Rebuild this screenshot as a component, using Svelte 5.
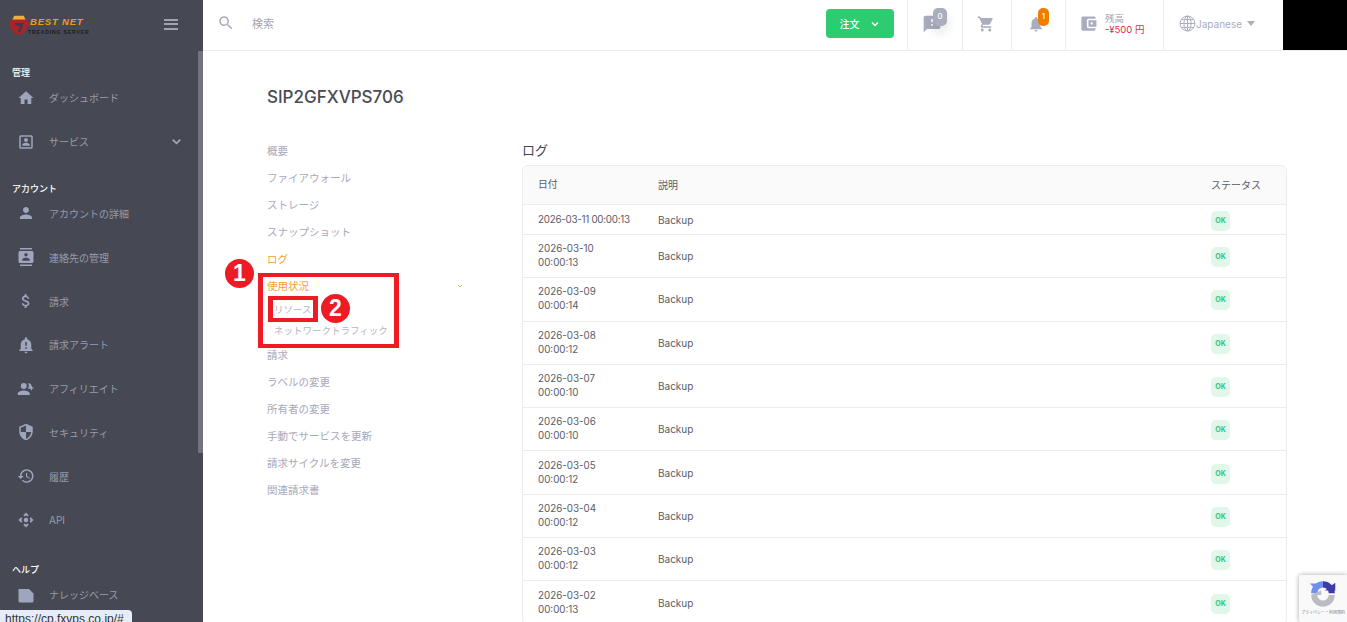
<script>
  const sideGroups = [
    { label: '管理', items: [
      { name: 'ダッシュボード', icon: 'home' },
      { name: 'サービス', icon: 'box', chevron: true }
    ]},
    { label: 'アカウント', items: [
      { name: 'アカウントの詳細', icon: 'person' },
      { name: '連絡先の管理', icon: 'contacts' },
      { name: '請求', icon: 'money' },
      { name: '請求アラート', icon: 'alert' },
      { name: 'アフィリエイト', icon: 'group' },
      { name: 'セキュリティ', icon: 'shield' },
      { name: '履歴', icon: 'history' },
      { name: 'API', icon: 'api' }
    ]},
    { label: 'ヘルプ', items: [
      { name: 'ナレッジベース', icon: 'note' }
    ]}
  ];

  const icons = {
    home: 'M10 20v-6h4v6h5v-8h3L12 3 2 12h3v8z',
    box: 'M3 5v14a2 2 0 0 0 2 2h14a2 2 0 0 0 2-2V5a2 2 0 0 0-2-2H5a2 2 0 0 0-2 2zm2 0h14v14H5zm7 7a2.6 2.6 0 1 0 0-5.2 2.6 2.6 0 0 0 0 5.2zm-5 5h10v-1.2c0-1.9-3.3-2.8-5-2.8s-5 .9-5 2.8z',
    person: 'M12 12c2.21 0 4-1.79 4-4s-1.79-4-4-4-4 1.79-4 4 1.79 4 4 4zm0 2c-2.67 0-8 1.34-8 4v2h16v-2c0-2.66-5.33-4-8-4z',
    contacts: 'M20 0H4v2h16V0zM4 24h16v-2H4v2zM20 4H4c-1.1 0-2 .9-2 2v12c0 1.1.9 2 2 2h16c1.1 0 2-.9 2-2V6c0-1.1-.9-2-2-2zm-8 2.75c1.24 0 2.25 1.01 2.25 2.25s-1.01 2.25-2.25 2.25S9.75 10.24 9.75 9 10.76 6.75 12 6.75zM17 17H7v-1.5c0-1.67 3.33-2.5 5-2.5s5 .83 5 2.5V17z',
    money: 'M11.8 10.9c-2.27-.59-3-1.2-3-2.15 0-1.09 1.01-1.85 2.7-1.85 1.78 0 2.44.85 2.5 2.1h2.21c-.07-1.72-1.12-3.3-3.21-3.81V3h-3v2.16c-1.94.42-3.5 1.68-3.5 3.61 0 2.31 1.91 3.46 4.7 4.13 2.5.6 3 1.48 3 2.41 0 .69-.49 1.79-2.7 1.79-2.06 0-2.87-.92-2.98-2.1h-2.2c.12 2.19 1.76 3.42 3.68 3.83V21h3v-2.15c1.95-.37 3.5-1.5 3.5-3.55 0-2.84-2.43-3.81-4.7-4.4z',
    alert: 'M12 23c1.1 0 1.99-.89 1.99-1.99h-3.98c0 1.1.89 1.99 1.99 1.99zm7-6v-6c0-3.35-2.36-6.15-5.5-6.83V3c0-.83-.67-1.5-1.5-1.5s-1.5.67-1.5 1.5v1.17C7.36 4.85 5 7.65 5 11v6l-2 2v1h18v-1l-2-2zm-6 0h-2v-2h2v2zm0-4h-2V8h2v5z',
    group: 'M9 12a4 4 0 1 0 0-8 4 4 0 0 0 0 8zm0 2c-2.7 0-8 1.3-8 4v2h16v-2c0-2.7-5.3-4-8-4zm6.5-2.2a3.8 3.8 0 0 0 0-7.6c-.4 0-.7.1-1 .2a6 6 0 0 1 0 7.2c.3.1.6.2 1 .2zM20 10V8h-1.5v2h-2v1.5h2v2H20v-2h2V10z',
    shield: 'M12 1L3 5v6c0 5.55 3.84 10.74 9 12 5.16-1.26 9-6.45 9-12V5l-9-4zm0 10.99h7c-.53 4.12-3.28 7.79-7 8.94V12H5V6.3l7-3.11v8.8z',
    history: 'M13 3c-4.97 0-9 4.03-9 9H1l3.89 3.89.07.14L9 12H6c0-3.87 3.13-7 7-7s7 3.13 7 7-3.13 7-7 7c-1.93 0-3.68-.79-4.94-2.06l-1.42 1.42C8.27 19.99 10.51 21 13 21c4.97 0 9-4.03 9-9s-4.03-9-9-9zm-1 5v5l4.28 2.54.72-1.21-3.5-2.08V8H12z',
    api: 'M15.54 5.54L13.77 7.3 12 5.54 10.23 7.3 8.46 5.54 12 2zm2.92 10l-1.76-1.77L18.46 12l-1.76-1.77 1.76-1.77L22 12zm-10 2.92l1.77-1.76L12 18.46l1.77-1.76 1.77 1.76L12 22zm-2.92-10l1.76 1.77L5.54 12l1.76 1.77-1.76 1.77L2 12zM12 9a3 3 0 1 0 0 6 3 3 0 0 0 0-6z',
    note: 'M2 4h14l6 6v10a2 2 0 0 1-2 2H4a2 2 0 0 1-2-2z'
  };

  const subnav = [
    { name: '概要' },
    { name: 'ファイアウォール' },
    { name: 'ストレージ' },
    { name: 'スナップショット' },
    { name: 'ログ', active: true },
    { name: '使用状況', active: true, open: true, children: ['リソース', 'ネットワークトラフィック'] },
    { name: '請求' },
    { name: 'ラベルの変更' },
    { name: '所有者の変更' },
    { name: '手動でサービスを更新' },
    { name: '請求サイクルを変更' },
    { name: '関連請求書' }
  ];

  const logs = [
    ['2026-03-11', '00:00:13'],
    ['2026-03-10', '00:00:13'],
    ['2026-03-09', '00:00:14'],
    ['2026-03-08', '00:00:12'],
    ['2026-03-07', '00:00:10'],
    ['2026-03-06', '00:00:10'],
    ['2026-03-05', '00:00:12'],
    ['2026-03-04', '00:00:12'],
    ['2026-03-03', '00:00:12'],
    ['2026-03-02', '00:00:13']
  ];
</script>

<div class="shell">
  <aside class="sidebar">
    <div class="brand">
      <svg class="logo" viewBox="0 0 30 30" width="20" height="20">
        <path d="M8 1h14l3 6H5z" fill="#e8b23a" />
        <path d="M3 7h24l3 8-9 14H9L0 15z" fill="#a8242a" />
        <path d="M9 12h13l-5 14h-4l4-10h-7z" fill="#3a3d46" />
      </svg>
      <div class="brand-text">
        <span class="brand-top">BEST NET</span>
        <span class="brand-sub">TREADING SERVER</span>
      </div>
      <div class="burger"><i></i><i></i><i></i></div>
    </div>
    <nav class="side-nav">
      {#each sideGroups as group}
        <div class="side-group">
          <div class="side-label">{group.label}</div>
          {#each group.items as item}
            <div class="side-item">
              <svg class="side-icon" viewBox="0 0 24 24" width="18" height="18"><path d={icons[item.icon]} /></svg>
              <span>{item.name}</span>
              {#if item.chevron}
                <svg class="side-chev" viewBox="0 0 24 24" width="15" height="15"><path d="M6 9l6 6 6-6" /></svg>
              {/if}
            </div>
          {/each}
        </div>
      {/each}
    </nav>
    <div class="side-thumb"></div>
  </aside>

  <div class="main">
    <header class="topbar">
      <div class="search">
        <svg viewBox="0 0 24 24" width="18" height="18"><path d="M15.5 14h-.79l-.28-.27C15.41 12.59 16 11.11 16 9.5 16 5.91 13.09 3 9.5 3S3 5.91 3 9.5 5.91 16 9.5 16c1.61 0 3.09-.59 4.23-1.57l.27.28v.79l5 4.99L20.49 19l-4.99-5zm-6 0C7.01 14 5 11.99 5 9.5S7.01 5 9.5 5 14 7.01 14 9.5 11.99 14 9.5 14z" /></svg>
        <span>検索</span>
      </div>
      <button class="order">
        注文
        <svg viewBox="0 0 24 24" width="12" height="12"><path d="M6 9l6 6 6-6" /></svg>
      </button>
      <div class="cell chat">
        <svg viewBox="0 0 24 24" width="20" height="20"><path d="M20 2H4c-1.1 0-1.99.9-1.99 2L2 22l4-4h14c1.1 0 2-.9 2-2V4c0-1.1-.9-2-2-2zm-7 12h-2v-2h2v2zm0-4h-2V6h2v4z" /></svg>
        <b class="badge grey">0</b>
      </div>
      <div class="cell cart">
        <svg viewBox="0 0 24 24" width="18" height="18"><path d="M7 18c-1.1 0-1.99.9-1.99 2S5.9 22 7 22s2-.9 2-2-.9-2-2-2zM1 2v2h2l3.6 7.59-1.35 2.45c-.16.28-.25.61-.25.96 0 1.1.9 2 2 2h12v-2H7.42c-.14 0-.25-.11-.25-.25l.03-.12.9-1.63h7.45c.75 0 1.41-.41 1.75-1.03l3.58-6.49c.08-.14.12-.31.12-.48 0-.55-.45-1-1-1H5.21l-.94-2H1zm16 16c-1.1 0-1.99.9-1.99 2s.89 2 1.99 2 2-.9 2-2-.9-2-2-2z" /></svg>
      </div>
      <div class="cell bell">
        <svg viewBox="0 0 24 24" width="18" height="18"><path d="M12 22c1.1 0 2-.9 2-2h-4c0 1.1.89 2 2 2zm6-6v-5c0-3.07-1.64-5.64-4.5-6.32V4c0-.83-.67-1.5-1.5-1.5s-1.5.67-1.5 1.5v.68C7.63 5.36 6 7.92 6 11v5l-2 2v1h16v-1l-2-2z" /></svg>
        <b class="badge orange">1</b>
      </div>
      <div class="cell wallet">
        <svg viewBox="0 0 24 24" width="19" height="19"><path d="M21 18v1c0 1.1-.9 2-2 2H5c-1.11 0-2-.9-2-2V5c0-1.1.89-2 2-2h14c1.1 0 2 .9 2 2v1h-9c-1.11 0-2 .9-2 2v8c0 1.1.89 2 2 2h9zm-9-2h10V8H12v8zm4-2.5c-.83 0-1.5-.67-1.5-1.5s.67-1.5 1.5-1.5 1.5.67 1.5 1.5-.67 1.5-1.5 1.5z" /></svg>
        <div class="balance">
          <span>残高</span>
          <strong>-¥500 円</strong>
        </div>
      </div>
      <div class="cell lang">
        <svg class="globe" viewBox="0 0 24 24" width="17" height="17">
          <circle cx="12" cy="12" r="10.5" />
          <ellipse cx="12" cy="12" rx="5" ry="10.5" />
          <path d="M12 1.5v21M1.5 12h21M3 6.5h18M3 17.5h18" />
        </svg>
        <span>Japanese</span>
        <i class="caret"></i>
      </div>
      <div class="black"></div>
    </header>

    <div class="page">
      <h1>SIP2GFXVPS706</h1>
      <div class="columns">
        <ul class="subnav">
          {#each subnav as entry}
            <li class:active={entry.active}>
              <div class="subnav-row">
                {entry.name}
                {#if entry.open}
                  <svg viewBox="0 0 24 24" width="8" height="8"><path d="M6 9l6 6 6-6" /></svg>
                {/if}
              </div>
              {#if entry.children}
                <ul class="subnav-children">
                  {#each entry.children as child}
                    <li>{child}</li>
                  {/each}
                </ul>
              {/if}
            </li>
          {/each}
        </ul>

        <section class="logs">
          <h2>ログ</h2>
          <div class="card">
            <div class="row head">
              <div class="c-date">日付</div>
              <div class="c-desc">説明</div>
              <div class="c-stat">ステータス</div>
            </div>
            {#each logs as log, i}
              <div class="row" class:single={i === 0}>
                <div class="c-date">
                  {#if i === 0}
                    {log[0]} {log[1]}
                  {:else}
                    {log[0]}<br />{log[1]}
                  {/if}
                </div>
                <div class="c-desc">Backup</div>
                <div class="c-stat"><span class="ok">OK</span></div>
              </div>
            {/each}
          </div>
        </section>
      </div>
    </div>
  </div>

  <!-- annotations drawn over the screenshot -->
  <div class="mark box-outer"></div>
  <div class="mark box-inner"></div>
  <div class="mark num num-1">1</div>
  <div class="mark num num-2">2</div>

  <div class="url-tip">https://cp.fxvps.co.jp/#</div>

  <div class="recaptcha">
    <svg viewBox="0 0 32 32" width="30" height="28">
      <path d="M6 15A10 10 0 0 1 16 5" fill="none" stroke="#6f8ff0" stroke-width="7" />
      <path d="M1 4h9v9z" fill="#6f8ff0" />
      <path d="M16 5A10 10 0 0 1 26 15" fill="none" stroke="#3a3aa8" stroke-width="7" />
      <path d="M18 12h12V3z" fill="#3a3aa8" />
      <path d="M26 17A10 10 0 0 1 6 17" fill="none" stroke="#b9bcc0" stroke-width="7" />
      <path d="M2 17h12v-5z" fill="#b9bcc0" />
    </svg>
    <span>プライバシー・利用規約</span>
  </div>
</div>

<style>
  :global(body) {
    margin: 0;
    background: #fff;
    overflow: hidden;
  }

  .shell {
    position: relative;
    display: flex;
    height: 622px;
    overflow: hidden;
    font-family: Inter, "Noto Sans CJK JP", sans-serif;
    font-size: 10px;
    color: #55565f;
  }

  .sidebar {
    position: relative;
    flex: 0 0 203px;
    background: #464953;
    color: #969bad;
    overflow: hidden;
  }

  .brand {
    display: flex;
    align-items: center;
    height: 50px;
    padding: 0 25px 0 9px;
    box-sizing: border-box;
  }

  .brand-text {
    display: flex;
    flex-direction: column;
    margin-left: -1px;
    line-height: 1;
  }

  .brand-top {
    color: #f39c12;
    font: italic 700 9.5px "Liberation Sans", sans-serif;
    letter-spacing: 0.8px;
    padding-left: 2px;
  }

  .brand-sub {
    color: #1c1c20;
    font: 700 5px "Liberation Sans", sans-serif;
    letter-spacing: 0.9px;
    margin-top: 2px;
  }

  .burger {
    margin: -2px 0 0 auto;
    width: 14px;
    display: flex;
    flex-direction: column;
    gap: 2.5px;
  }

  .burger i {
    height: 2px;
    background: #a0a3ae;
  }

  .side-nav {
    padding-top: 16px;
  }

  .side-group {
    margin-top: 18px;
  }

  .side-group:first-child {
    margin-top: 0;
  }

  .side-group:last-child {
    margin-top: 21px;
  }

  .side-label {
    padding-left: 12px;
    height: 13px;
    line-height: 13px;
    color: #fff;
    font-size: 9px;
    font-weight: 500;
    margin-bottom: -3px;
  }

  .side-item {
    display: flex;
    align-items: center;
    height: 43.8px;
    padding-left: 17px;
    padding-right: 19px;
  }

  .side-item span {
    margin-left: 14px;
    font-size: 10px;
  }

  .side-icon {
    flex: none;
    fill: #9ea5bd;
  }

  .side-chev {
    margin-left: auto;
    fill: none;
    stroke: #a5a9b8;
    stroke-width: 2.5;
  }

  .side-thumb {
    position: absolute;
    right: 0;
    top: 51px;
    width: 5px;
    height: 402px;
    background: #70737c;
  }

  .main {
    flex: 1;
    min-width: 0;
    display: flex;
    flex-direction: column;
  }

  .topbar {
    flex: 0 0 51px;
    box-sizing: border-box;
    display: flex;
    align-items: stretch;
    border-bottom: 1px solid #ececf0;
  }

  .search {
    flex: 1;
    display: flex;
    align-items: center;
    gap: 17px;
    padding: 0 0 4px 14px;
    color: #a3a5b0;
    font-size: 11px;
  }

  .search svg {
    fill: #a9aebd;
  }

  .order {
    align-self: center;
    margin: -3px 13px 0 1px;
    width: 68px;
    height: 29px;
    border: 0;
    border-radius: 4px;
    background: #2ecc71;
    color: #fff;
    font: 500 10px Inter, "Noto Sans CJK JP", sans-serif;
    display: flex;
    align-items: center;
    justify-content: center;
    gap: 9px;
  }

  .order svg {
    fill: none;
    stroke: #fff;
    stroke-width: 3;
  }

  .cell {
    position: relative;
    display: flex;
    align-items: center;
    justify-content: center;
    border-left: 1px solid #ececf0;
    box-sizing: border-box;
    margin-bottom: -1px;
    padding-bottom: 4px;
  }

  .cell svg {
    fill: #a9adbd;
  }

  .chat { width: 55px; padding-right: 7px; }
  .cart { width: 49px; padding-right: 2px; }
  .bell { width: 54px; padding-right: 5px; }

  .wallet {
    width: 98px;
    justify-content: flex-start;
    padding-left: 13px;
    gap: 7px;
  }

  .balance {
    display: flex;
    flex-direction: column;
    line-height: 11px;
    font-size: 9.5px;
  }

  .balance span {
    color: #a3a5b0;
  }

  .balance strong {
    color: #e0284a;
    font-weight: 400;
    white-space: nowrap;
  }

  .lang {
    width: 114px;
    justify-content: flex-start;
    padding-left: 15px;
    color: #a9adbd;
    font-size: 10px;
  }

  .lang .globe {
    fill: none;
    stroke: #a9adbd;
    stroke-width: 1.4;
  }

  .caret {
    margin-left: 5px;
    border: 4px solid transparent;
    border-top: 5px solid #a9adbd;
    border-bottom: 0;
  }

  .black {
    width: 64px;
    margin-left: 6px;
    background: #000;
  }

  .badge {
    position: absolute;
    top: 8px;
    color: #fff;
    font-size: 8px;
    font-weight: 500;
    text-align: center;
    line-height: 16px;
    border-radius: 5px;
  }

  .badge.grey {
    left: 25px;
    width: 14px;
    height: 18px;
    background: #a9adbd;
    box-shadow: 0 6px 12px rgba(0, 0, 0, 0.12);
  }

  .badge.orange {
    left: 26px;
    width: 11px;
    height: 18px;
    background: #f07d00;
  }

  .page {
    flex: 1;
    padding: 35px 60px 0 64px;
    min-height: 0;
  }

  h1 {
    margin: 0 0 31px;
    font-size: 17px;
    line-height: 22px;
    font-weight: 500;
    color: #4a4b55;
  }

  .columns {
    display: flex;
  }

  .subnav {
    flex: 0 0 255px;
    list-style: none;
    margin: -2px 0 0;
    padding: 0;
    font-size: 10.5px;
    color: #a8a8bb;
  }

  .subnav-row {
    display: flex;
    align-items: center;
    justify-content: space-between;
    width: 197px;
    height: 27px;
  }

  .subnav li.active > .subnav-row {
    color: #f5a033;
  }

  .subnav-row svg {
    fill: none;
    stroke: #f5a033;
    stroke-width: 2.5;
  }

  .subnav-children {
    list-style: none;
    margin: 0;
    padding: 0 0 0 7px;
    font-size: 9.5px;
    color: #b4b4c6;
  }

  .subnav-children li {
    height: 22px;
    line-height: 22px;
  }

  .subnav-children li + li {
    height: 20px;
    line-height: 20px;
  }

  .logs {
    flex: 1;
    min-width: 0;
  }

  h2 {
    margin: 1px 0 5px;
    font-size: 13px;
    line-height: 20px;
    font-weight: 400;
    color: #44454e;
  }

  .card {
    border: 1px solid #ececf0;
    border-radius: 6px;
    overflow: hidden;
  }

  .row {
    display: flex;
    align-items: center;
    height: 43.3px;
    box-sizing: border-box;
    padding-left: 15px;
    border-top: 1px solid #ececf0;
    line-height: 14px;
    font-size: 10px;
    color: #5a5b66;
  }

  .row.head {
    height: 38px;
    border-top: 0;
    background: #fafafa;
  }

  .row.single {
    height: 30px;
  }

  .c-date { flex: 0 0 120px; white-space: nowrap; font-size: 9.8px; }
  .row.single .c-date { letter-spacing: -0.25px; }
  .c-desc { flex: 1; }
  .c-stat { flex: 0 0 75px; }
  .row:not(.head) .c-stat { padding-top: 2px; }

  .ok {
    display: inline-block;
    width: 19px;
    height: 20px;
    line-height: 20px;
    border-radius: 5px;
    background: #e0f7ea;
    color: #35c47a;
    font-size: 7px;
    font-weight: 700;
    text-align: center;
  }

  .mark {
    position: absolute;
    box-sizing: border-box;
  }

  .box-outer {
    left: 258px;
    top: 273px;
    width: 141px;
    height: 75px;
    border: solid #ed1c24;
    border-width: 4px 5px;
  }

  .box-inner {
    left: 268px;
    top: 296px;
    width: 50px;
    height: 26px;
    border: solid #ed1c24;
    border-width: 4px 5px;
  }

  .num {
    width: 29px;
    height: 29px;
    border-radius: 50%;
    background: #ed1c24;
    color: #fff;
    font: 700 23px/29px "Liberation Sans", sans-serif;
    text-align: center;
  }

  .num-1 { left: 225px; top: 259px; }
  .num-2 { left: 321px; top: 294px; }

  .url-tip {
    position: absolute;
    left: 0;
    bottom: 0;
    width: 132px;
    height: 12px;
    box-sizing: border-box;
    padding: 2px 0 0 5px;
    background: #e6edf8;
    border-top-right-radius: 4px;
    color: #333;
    font: 12px/14px "Liberation Sans", sans-serif;
    overflow: hidden;
    white-space: nowrap;
  }

  .recaptcha {
    position: absolute;
    right: 0;
    bottom: 0;
    width: 48px;
    height: 47px;
    box-sizing: border-box;
    padding-top: 5px;
    background: #f9f9f9;
    border-radius: 2px 0 0 2px;
    box-shadow: 0 0 5px rgba(0, 0, 0, 0.35);
    display: flex;
    flex-direction: column;
    align-items: center;
    gap: 2px;
  }

  .recaptcha span {
    font-size: 4px;
    line-height: 5px;
    color: #777;
    white-space: nowrap;
  }
</style>
